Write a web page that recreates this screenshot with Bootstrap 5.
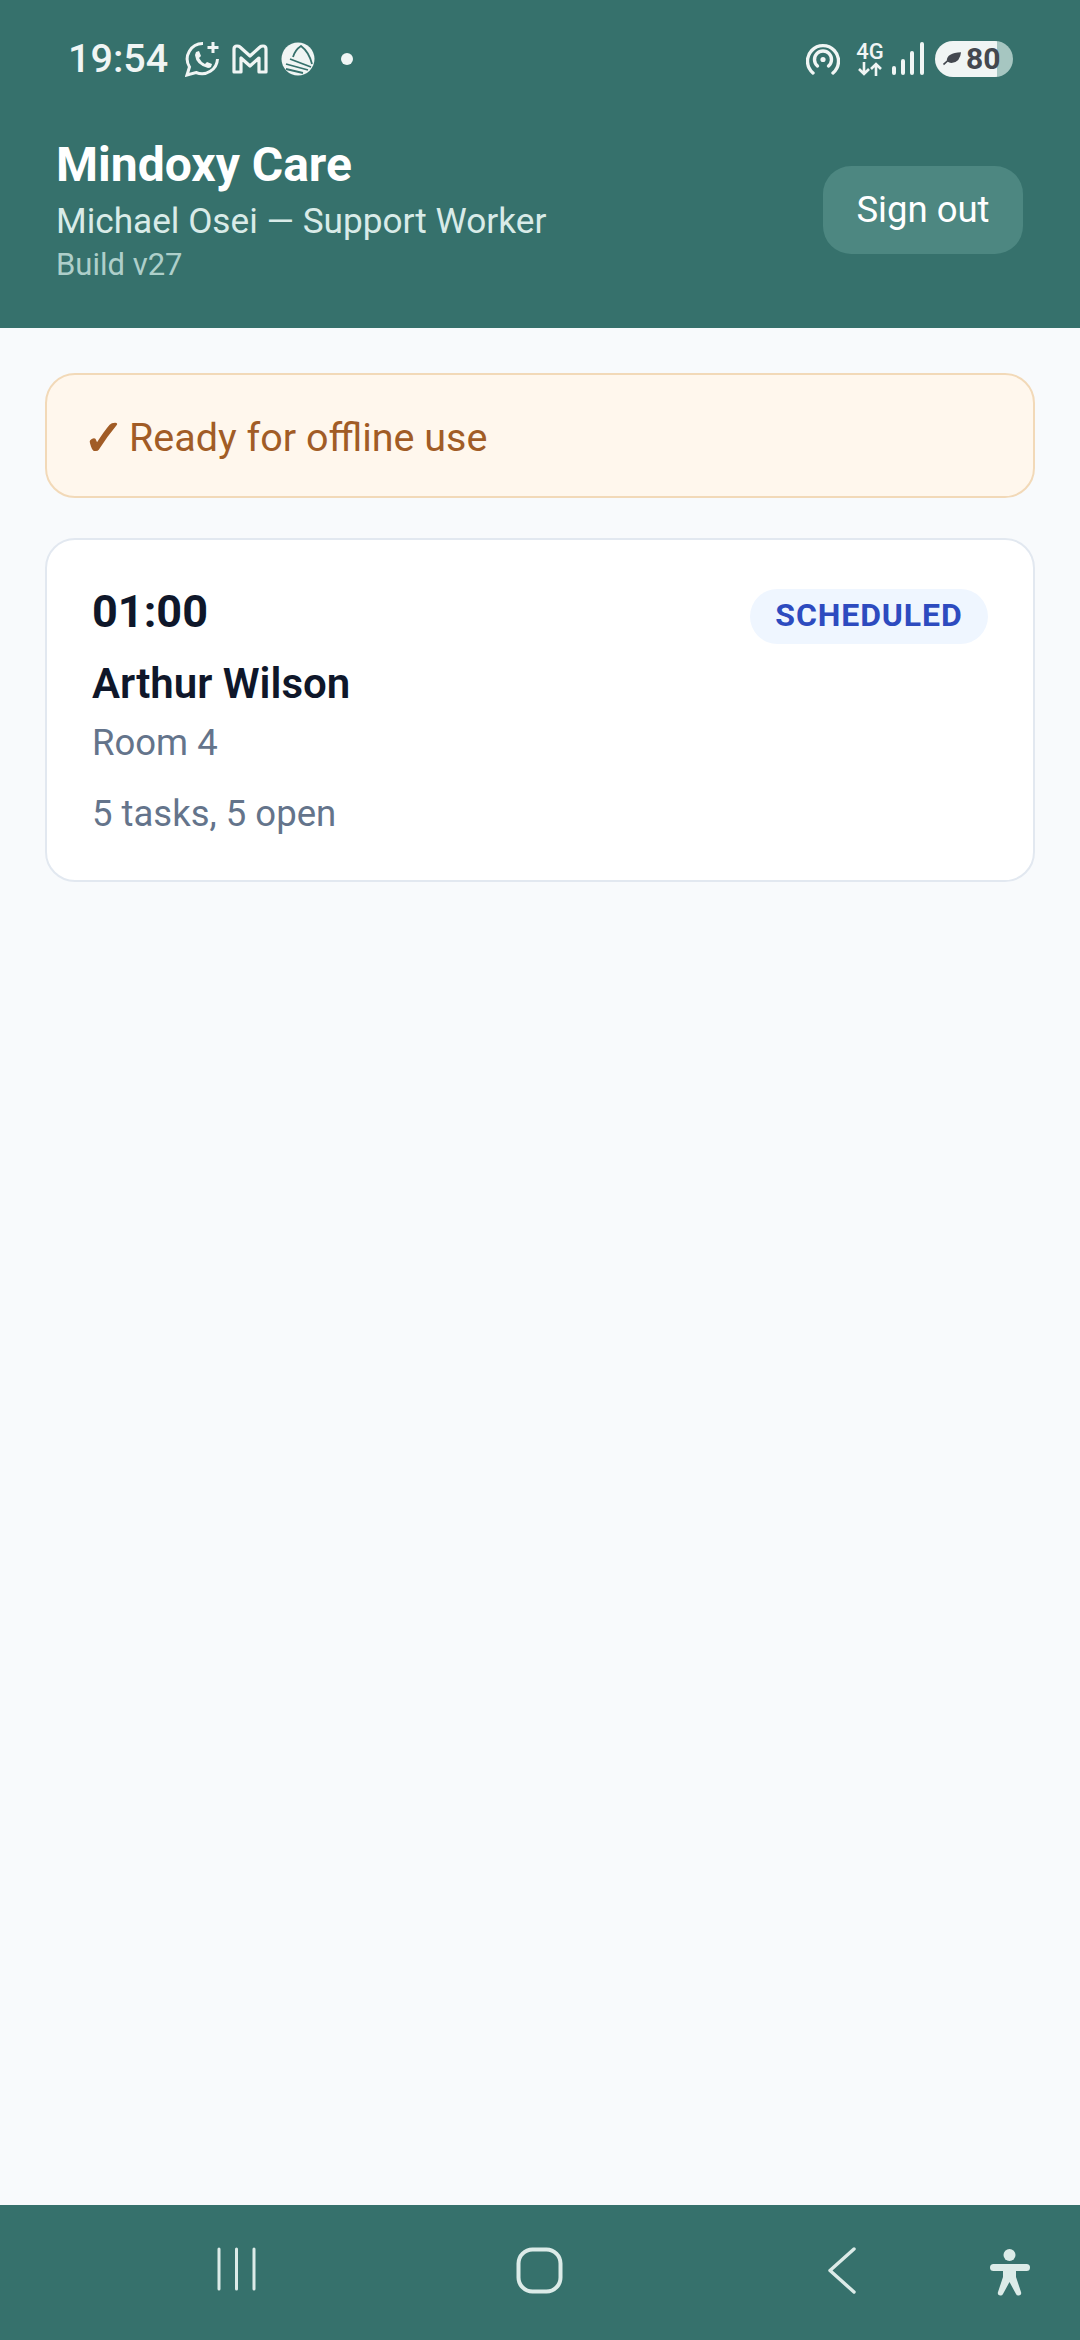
<!DOCTYPE html>
<html lang="en">

<head>
  <meta charset="UTF-8">
  <meta name="viewport" content="width=device-width, initial-scale=1.0">
  <title>Mindoxy Care</title>
  <link href="https://cdn.jsdelivr.net/npm/bootstrap@5.3.0/dist/css/bootstrap.min.css" rel="stylesheet">

  <style>
    body {
      background-color: #f8fafc;
      font-family: Roboto, "Liberation Sans", sans-serif;
      margin: 0;
    }

    .app-top {
      background-color: #36716c;
      height: 328px;
      padding: 41px 56px 0;
      flex-shrink: 0;
    }

    .status-row {
      height: 36px;
      color: #f0f5f4;
      margin-right: 11px;
    }

    .status-time {
      font-size: 39.5px;
      font-weight: 500;
      line-height: 36px;
      margin-left: 12px;
      margin-right: 18px;
      width: 99px;
      white-space: nowrap;
    }

    .icon-gmail {
      margin-left: 11px;
    }

    .icon-news {
      margin-left: 13px;
    }

    .status-dot {
      width: 12px;
      height: 12px;
      border-radius: 50%;
      background: #f0f5f4;
      margin-left: 26px;
    }

    .net-label {
      width: 30px;
      font-size: 22px;
      font-weight: 500;
      line-height: 17px;
      margin-left: 15px;
      text-align: center;
    }

    .net-arrows {
      margin-top: 2px;
    }

    .icon-signal {
      margin-left: 7px;
    }

    .battery-pill {
      width: 78px;
      height: 36px;
      border-radius: 18px;
      background: linear-gradient(to right, #f0f5f4 62px, #a6c6c1 62px);
      color: #43484f;
      font-size: 30px;
      font-weight: 700;
      line-height: 36px;
      margin-left: 11px;
      padding-left: 8px;
    }

    .leaf-icon {
      margin-right: 4px;
    }

    .head-row {
      margin-top: 61px;
    }

    .app-title {
      color: #fff;
      font-size: 48px;
      font-weight: 700;
      line-height: 54px;
      margin: 0;
    }

    .app-user {
      color: #d9ebe8;
      font-size: 35.2px;
      line-height: 46px;
      margin-top: 6px;
    }

    .app-build {
      color: #aecfca;
      font-size: 31px;
      line-height: 42px;
    }

    .signout-btn {
      background: #4d8781;
      border: 0;
      border-radius: 28px;
      color: #fff;
      font-size: 36.5px;
      height: 88px;
      margin-bottom: 4px;
      margin-right: 1px;
      width: 200px;
      padding: 0;
    }

    .signout-btn:hover {
      background: #4d8781;
      color: #fff;
    }

    .page-main {
      padding: 45px 45px 0;
    }

    .offline-box {
      background: #fff7ed;
      border: 2px solid #f2d9b8;
      border-radius: 30px;
      color: #a15c26;
      font-size: 39.5px;
      height: 125px;
      padding: 5px 36px 0;
    }

    .offline-tick {
      font-family: "DejaVu Sans", sans-serif;
      font-size: 50px;
      -webkit-text-stroke: 1.6px #a15c26;
      margin-right: 4px;
    }

    .visit-box {
      background: #fff;
      border: 2px solid #e2e8f0;
      border-radius: 30px;
      height: 344px;
      margin-top: 40px;
      padding: 46px 45px 0;
    }

    .visit-time {
      color: #0f172a;
      font-size: 45px;
      font-weight: 700;
      line-height: 52px;
    }

    .visit-status {
      background: #eff6ff;
      border-radius: 28px;
      color: #2d4bbf;
      font-size: 32px;
      font-weight: 700;
      height: 55px;
      letter-spacing: 0.9px;
      line-height: 53px;
      margin-top: 3px;
      text-align: center;
      width: 238px;
    }

    .visit-name {
      color: #0f172a;
      font-size: 42px;
      font-weight: 600;
      line-height: 50px;
      margin-top: 15px;
    }

    .visit-line {
      color: #64748b;
      font-size: 36.5px;
      line-height: 44px;
      margin-top: 12px;
    }

    .visit-tasks {
      margin-top: 27px;
    }

    .sys-nav {
      background-color: #36716c;
      height: 135px;
      padding: 42px 0 0 217px;
      flex-shrink: 0;
    }

    .nav-home {
      margin-left: 260px;
    }

    .nav-back {
      margin-left: 265px;
    }

    .nav-access {
      margin-left: 134px;
      margin-top: 2px;
    }
  </style>

</head>

<body>
  <div class="d-flex flex-column vh-100">
    <header class="app-top">
      <div class="status-row d-flex align-items-center">
        <span class="status-time">19:54</span>
        <svg width="36" height="36" viewBox="0 0 36 36" fill="none" stroke="#f0f5f4" stroke-width="3">
          <path d="M18 2.5 A15.5 15.5 0 0 0 4.5 26 L2 34 L11 31.5 A15.5 15.5 0 0 0 32.5 18" />
          <path d="M11 11 l3 -1 l2 5 l-2 2 q2 4 6 6 l2 -2 l5 2 l-1 3 q-1 1 -3 1 q-12 -3 -13 -13 z" fill="#f0f5f4" stroke="none" />
          <path d="M28 1 v11 M22.500 6.500 h11" />
        </svg>
        <svg class="icon-gmail" width="36" height="30" viewBox="0 0 36 30" fill="none" stroke="#f0f5f4" stroke-width="3.2" stroke-linejoin="round">
          <path d="M2 5 q0 -3 3 -3 q2 0 3 1 l10 9 l10 -9 q1 -1 3 -1 q3 0 3 3 v23 h-7 v-14 l-9 8 l-9 -8 v14 h-7 z" />
        </svg>
        <svg class="icon-news" width="34" height="34" viewBox="0 0 34 34">
          <circle cx="17" cy="17" r="16.500" fill="#f0f5f4" />
          <path d="M12 15 Q14 8 20 4 Q28 10 31 22 M9 17 L30 25 M5 22 L27 28 M5 27 L22 31" fill="none" stroke="#36716c" stroke-width="1.800" />
        </svg>
        <span class="status-dot"></span>
        <span class="flex-grow-1"></span>
        <svg width="34" height="32" viewBox="0 0 34 32" fill="none" stroke="#f0f5f4" stroke-width="3.4" stroke-linecap="round">
          <path d="M7 30 A15.5 15.5 0 1 1 27 30" />
          <path d="M11.5 23 A8.5 8.5 0 1 1 22.5 23" />
          <circle cx="17" cy="16.5" r="2.6" fill="#f0f5f4" stroke="none" />
        </svg>
        <span class="net-label">4G
          <svg class="net-arrows d-block mx-auto" width="26" height="14" viewBox="0 0 26 14" fill="none" stroke="#f0f5f4" stroke-width="2.6">
            <path d="M7 0 v12 M2 7 l5 5 l5 -5 M19 14 v-12 M14 7 l5 -5 l5 5" />
          </svg>
        </span>
        <svg class="icon-signal" width="32" height="34" viewBox="0 0 32 34" fill="#f0f5f4">
          <rect x="0" y="24" width="4" height="9" rx="2" />
          <rect x="9" y="17" width="4" height="16" rx="2" />
          <rect x="18" y="9" width="4" height="24" rx="2" />
          <rect x="28" y="0" width="4" height="33" rx="2" />
        </svg>
        <span class="battery-pill d-flex align-items-center">
          <svg class="leaf-icon" width="19" height="14" viewBox="0 0 20 14">
            <path d="M19 0 Q18 10 10 11 Q7 11.500 5 10 L1 13.500 L0 12 L4 8.500 Q4 1 19 0 Z" fill="#43484f" />
          </svg>
          <span>80</span>
        </span>
      </div>

      <div class="head-row d-flex justify-content-between align-items-center">
        <div>
          <h1 class="app-title">Mindoxy Care</h1>
          <div class="app-user">Michael Osei — Support Worker</div>
          <div class="app-build">Build v27</div>
        </div>
        <button type="button" class="btn signout-btn">Sign out</button>
      </div>
    </header>

    <main class="page-main flex-grow-1">
      <div class="offline-box d-flex align-items-center"><span class="offline-tick">✓</span>Ready for offline use</div>

      <div class="visit-box">
        <div class="d-flex justify-content-between align-items-start">
          <div class="visit-time">01:00</div>
          <div class="visit-status">SCHEDULED</div>
        </div>
        <div class="visit-name">Arthur Wilson</div>
        <div class="visit-line">Room 4</div>
        <div class="visit-line visit-tasks">5 tasks, 5 open</div>
      </div>
    </main>

    <nav class="sys-nav d-flex align-items-start">
      <svg width="39" height="44" viewBox="0 0 39 44" stroke="#dcebe8" stroke-width="3" stroke-linecap="round">
        <path d="M2 2 V42 M19.5 2 V42 M37 2 V42" />
      </svg>
      <svg class="nav-home" width="47" height="47" viewBox="0 0 47 47" fill="none" stroke="#dcebe8" stroke-width="4">
        <rect x="2.5" y="2.5" width="42" height="42" rx="14" />
      </svg>
      <svg class="nav-back" width="28" height="47" viewBox="0 0 28 47" fill="none" stroke="#dcebe8" stroke-width="3.4" stroke-linecap="round" stroke-linejoin="round">
        <path d="M26 2 L2 23.5 L26 45" />
      </svg>
      <svg class="nav-access" width="40" height="48" viewBox="0 0 40 48" fill="#dcebe8">
        <circle cx="19.500" cy="6" r="6" />
        <rect x="0" y="15" width="40" height="7" rx="3.500" />
        <path d="M13 20 H26 L26 28 L31 43 Q32 46 29 46.500 Q27 47 26 45 L19.500 33 L13 45 Q12 47 10 46.500 Q7 46 8 43 L13 28 Z" />
      </svg>
    </nav>
  </div>

  <script src="https://cdn.jsdelivr.net/npm/bootstrap@5.3.0/dist/js/bootstrap.bundle.min.js"></script>
</body>

</html>
